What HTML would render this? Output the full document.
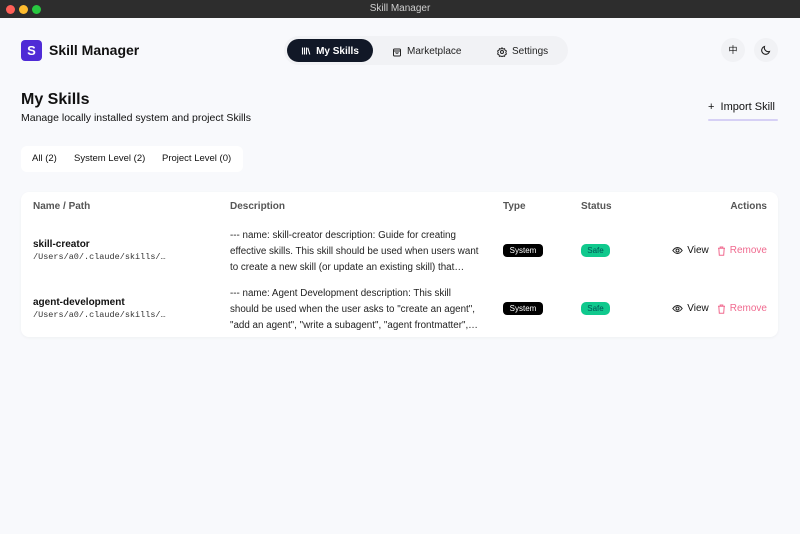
<!DOCTYPE html>
<html><head><meta charset="utf-8"><style>
*{box-sizing:border-box;margin:0;padding:0}
body{width:800px;height:534px;overflow:hidden;background:#f8f9fc;font-family:"Liberation Sans","Noto Sans CJK SC",sans-serif;color:#111;position:relative}
.tb{position:absolute;left:0;top:0;width:800px;height:18px;background:#2d2d2d;color:#cfcfcf;font-size:10px;text-align:center;line-height:18px}
.dot{position:absolute;top:5px;width:9px;height:9px;border-radius:50%}
.abs{position:absolute}
.nav{left:284px;top:36px;width:284px;height:29px;background:#f1f2f5;border-radius:15px}
.pill{left:287px;top:39px;width:86px;height:23px;background:#111827;border-radius:12px;color:#fff;font-size:10px;font-weight:bold;line-height:23px;text-align:center}
.ni{font-size:10px;color:#222;top:45px;display:flex;align-items:center;gap:5px}
.circ{top:38px;width:24px;height:24px;border-radius:50%;background:#f1f2f5;font-size:9px;text-align:center;line-height:24px}
.card{left:21px;top:192px;width:757px;height:145px;background:#fff;border-radius:8px;box-shadow:0 1px 3px rgba(0,0,0,.04)}
.th{top:201px;font-size:10px;font-weight:bold;color:#555}
.nm{font-size:10px;font-weight:bold}
.pa{font-family:"Liberation Mono",monospace;font-size:8.5px;color:#333}
.ds{font-size:9.8px;line-height:16px;color:#222;width:252px}
.sys{width:40px;height:13px;background:#000;color:#fff;border-radius:4px;font-size:8px;text-align:center;line-height:13px}
.safe{width:29px;height:13px;background:#10c98d;color:#055;border-radius:5px;font-size:8px;text-align:center;line-height:13px}
.act{font-size:10px;display:flex;align-items:center;gap:4px;right:33px}
</style></head><body>
<div class="tb">Skill Manager</div>
<div class="dot" style="left:6px;background:#ff5f57"></div>
<div class="dot" style="left:19px;background:#febc2e"></div>
<div class="dot" style="left:32px;background:#28c840"></div>
<div class="abs" style="left:21px;top:40px;width:21px;height:21px;background:#4f2bd6;border-radius:4px;color:#fff;font-weight:bold;font-size:13px;text-align:center;line-height:21px">S</div>
<div class="abs" style="left:49px;top:42px;font-size:14px;font-weight:bold">Skill Manager</div>
<div class="abs nav"></div>
<div class="abs pill" style="display:flex;align-items:center;justify-content:center;gap:5px;padding-top:1px"><svg width="10" height="10" viewBox="0 0 10 10" fill="none" stroke="#fff" stroke-width="1.1"><path d="M1.5 1.5v7M3.5 1.5v7M5.5 1.5v7M6.8 1.8l2 6.7"/></svg>My Skills</div>
<div class="abs ni" style="left:392px;top:46px"><svg width="10" height="10" viewBox="0 0 10 10" fill="none" stroke="#222" stroke-width="1"><rect x="1.5" y="2" width="7" height="7" rx="1"/><path d="M1.5 4h7M3.5 5.5q1.5 1.5 3 0"/></svg>Marketplace</div>
<div class="abs ni" style="left:497px;top:46px"><svg width="10" height="10" viewBox="0 0 10 10" fill="none" stroke="#222" stroke-width="1"><circle cx="5" cy="5" r="1.5"/><path d="M5 .8l1 1.2 1.6-.3.4 1.5 1.4.8-.6 1.5.6 1.5-1.4.8-.4 1.5-1.6-.3-1 1.2-1-1.2-1.6.3-.4-1.5-1.4-.8.6-1.5-.6-1.5 1.4-.8.4-1.5 1.6.3z"/></svg>Settings</div>
<div class="abs circ" style="left:721px">中</div>
<div class="abs circ" style="left:754px"><svg width="12" height="12" viewBox="0 0 12 12" style="margin-top:6px" fill="none" stroke="#222" stroke-width="1.1"><path d="M9.5 7.5A4 4 0 0 1 4.5 2.5a4 4 0 1 0 5 5z"/></svg></div>
<div class="abs" style="left:21px;top:91px;font-size:16px;font-weight:bold">My Skills</div>
<div class="abs" style="left:21px;top:112px;font-size:10.5px">Manage locally installed system and project Skills</div>
<div class="abs" style="left:708px;top:101px;font-size:11px">+&nbsp; Import Skill</div>
<div class="abs" style="left:708px;top:119px;width:70px;height:2px;background:#d6d0f5;border-radius:1px"></div>
<div class="abs" style="left:21px;top:146px;width:222px;height:26px;background:#fff;border-radius:6px"></div>
<div class="abs" style="left:32px;top:153px;font-size:9.5px">All (2)</div>
<div class="abs" style="left:74px;top:153px;font-size:9.5px">System Level (2)</div>
<div class="abs" style="left:162px;top:153px;font-size:9.5px">Project Level (0)</div>
<div class="abs card"></div>
<div class="abs th" style="left:33px">Name / Path</div>
<div class="abs th" style="left:230px">Description</div>
<div class="abs th" style="left:503px">Type</div>
<div class="abs th" style="left:581px">Status</div>
<div class="abs th" style="right:33px">Actions</div>

<div class="abs nm" style="left:33px;top:239px">skill-creator</div>
<div class="abs pa" style="left:33px;top:252px">/Users/a0/.claude/skills/…</div>
<div class="abs ds" style="left:230px;top:228px">--- name: skill-creator description: Guide for creating effective skills. This skill should be used when users want to create a new skill (or update an existing skill) that…</div>
<div class="abs sys" style="left:503px;top:244px">System</div>
<div class="abs safe" style="left:581px;top:244px">Safe</div>
<div class="abs act" style="top:245px"><svg width="11" height="9" viewBox="0 0 11 9" fill="none" stroke="#222" stroke-width="1"><path d="M.8 4.5Q5.5-1.5 10.2 4.5 5.5 10.5.8 4.5z"/><circle cx="5.5" cy="4.5" r="1.5"/></svg><span style="margin-right:4px">View</span><svg width="9" height="10" viewBox="0 0 9 10" fill="none" stroke="#f06a8f" stroke-width="1"><path d="M1 2.2h7M3.2 2.2V1h2.6v1.2M1.8 2.2l.5 7h4.4l.5-7"/></svg><span style="color:#f06a8f">Remove</span></div>

<div class="abs nm" style="left:33px;top:297px">agent-development</div>
<div class="abs pa" style="left:33px;top:310px">/Users/a0/.claude/skills/…</div>
<div class="abs ds" style="left:230px;top:286px">--- name: Agent Development description: This skill should be used when the user asks to "create an agent", "add an agent", "write a subagent", "agent frontmatter",…</div>
<div class="abs sys" style="left:503px;top:302px">System</div>
<div class="abs safe" style="left:581px;top:302px">Safe</div>
<div class="abs act" style="top:303px"><svg width="11" height="9" viewBox="0 0 11 9" fill="none" stroke="#222" stroke-width="1"><path d="M.8 4.5Q5.5-1.5 10.2 4.5 5.5 10.5.8 4.5z"/><circle cx="5.5" cy="4.5" r="1.5"/></svg><span style="margin-right:4px">View</span><svg width="9" height="10" viewBox="0 0 9 10" fill="none" stroke="#f06a8f" stroke-width="1"><path d="M1 2.2h7M3.2 2.2V1h2.6v1.2M1.8 2.2l.5 7h4.4l.5-7"/></svg><span style="color:#f06a8f">Remove</span></div>
</body></html>
